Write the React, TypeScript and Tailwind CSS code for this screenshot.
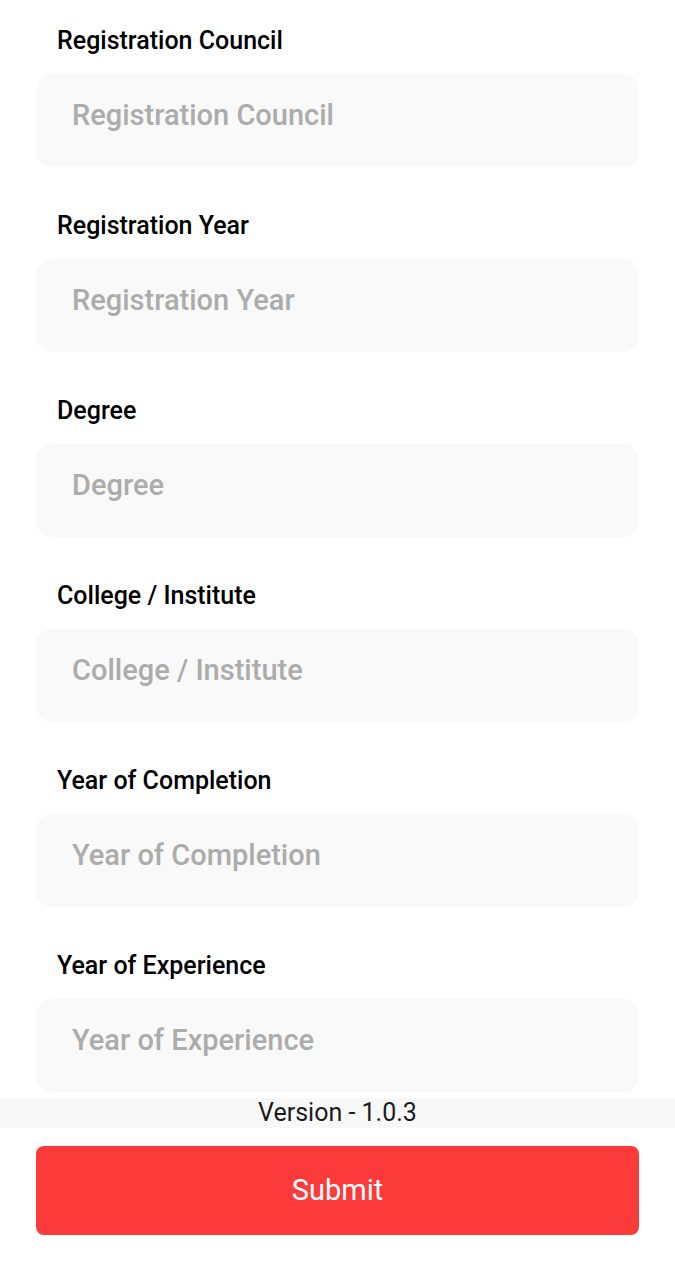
import React from 'react';

const fields: string[] = [
  "Registration Council",
  "Registration Year",
  "Degree",
  "College / Institute",
  "Year of Completion",
  "Year of Experience",
];

const App: React.FC = () => {
  return (
    <div className="w-[675px] h-[1280px] bg-white font-['Roboto',sans-serif]">
      <div className="px-[36px] pt-[26px]">
        {fields.map((field, i) => (
          <div key={field} className={i === fields.length - 1 ? "mb-[6px]" : "mb-[44px]"}>
            <label className="block pl-[21px] mb-[18px] text-[25px] leading-[30px] font-medium text-black">
              {field}
            </label>
            <input
              type="text"
              placeholder={field}
              className="w-full h-[93px] rounded-[16px] bg-[#f9f9f9] pl-[36px] pb-[12px] text-[29px] font-medium text-black placeholder:text-[#acacac] outline-none"
            />
          </div>
        ))}
      </div>
      <div className="h-[30px] bg-[#f8f8f8] flex items-center justify-center text-[25px] text-[#1c1c1c]">
        Version - 1.0.3
      </div>
      <div className="px-[36px] mt-[18px]">
        <button className="w-full h-[89px] rounded-[8px] bg-[#fc3a3a] text-white text-[29px]">
          Submit
        </button>
      </div>
    </div>
  );
};

export default App;
